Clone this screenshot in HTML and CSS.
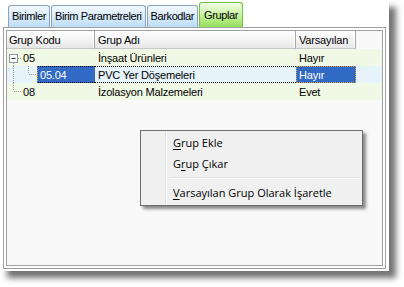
FILE: index.html
```html
<!DOCTYPE html>
<html>
<head>
<meta charset="utf-8">
<link rel="stylesheet" href="styles.css">
</head>
<body>
<div class="shot">
  <div class="tabs">
    <div class="tab">Birimler</div>
    <div class="tab">Birim Parametreleri</div>
    <div class="tab">Barkodlar</div>
    <div class="tab active">Gruplar</div>
  </div>
  <div class="panel">
    <div class="grid">
      <div class="row head">
        <div class="cell c1">Grup Kodu</div>
        <div class="cell c2">Grup Adı</div>
        <div class="cell c3">Varsayılan</div>
      </div>
      <div class="row green">
        <div class="cell c1 tree">
          <svg class="tl" width="16" height="17" viewBox="0 0 16 17">
            <rect x="2.5" y="5.5" width="8" height="8" fill="#fbfbfb" stroke="#8c9aa8"/>
            <path d="M4.5 9.5h4" stroke="#333" stroke-width="1"/>
            <path d="M11 9.5h4" stroke="#a0a0a0" stroke-dasharray="1 1"/>
            <path d="M6.5 14v3" stroke="#a0a0a0" stroke-dasharray="1 1"/>
          </svg>
          <span class="code">05</span>
        </div>
        <div class="cell c2">İnşaat Ürünleri</div>
        <div class="cell c3">Hayır</div>
      </div>
      <div class="row blue">
        <div class="cell c1 tree">
          <svg class="tl" width="30" height="17" viewBox="0 0 30 17">
            <path d="M6.5 0v17" stroke="#a0a0a0" stroke-dasharray="1 1"/>
            <path d="M21.5 0v8" stroke="#a0a0a0" stroke-dasharray="1 1"/>
            <path d="M22 8.5h8" stroke="#a0a0a0" stroke-dasharray="1 1"/>
          </svg>
          <span class="sel">05.04</span>
        </div>
        <div class="cell c2 focus">PVC Yer Döşemeleri</div>
        <div class="cell c3 selcell">Hayır</div>
      </div>
      <div class="row green">
        <div class="cell c1 tree">
          <svg class="tl" width="16" height="17" viewBox="0 0 16 17">
            <path d="M6.5 0v8" stroke="#a0a0a0" stroke-dasharray="1 1"/>
            <path d="M7 8.5h7" stroke="#a0a0a0" stroke-dasharray="1 1"/>
          </svg>
          <span class="code">08</span>
        </div>
        <div class="cell c2">İzolasyon Malzemeleri</div>
        <div class="cell c3">Evet</div>
      </div>
    </div>
  </div>
  <div class="menu">
    <div class="item"><u>G</u>rup Ekle</div>
    <div class="item">G<u>r</u>up Çıkar</div>
    <div class="sep"></div>
    <div class="item"><u>V</u>arsayılan Grup Olarak İşaretle</div>
  </div>
</div>
</body>
</html>
```

FILE: styles.css
```css
html, body {
  margin: 0;
  padding: 0;
  background: #ffffff;
}
body {
  width: 404px;
  height: 287px;
  overflow: hidden;
  font-family: "Liberation Sans", Arial, sans-serif;
  font-size: 11px;
  color: #000;
}
.shot {
  position: relative;
  width: 389px;
  height: 271px;
  background: #ffffff;
  box-shadow: 7px 7px 6px rgba(0, 0, 0, 0.55);
  display: flex;
  flex-direction: column;
}
.tabs {
  height: 27px;
  display: flex;
  align-items: flex-end;
  gap: 1px;
  padding-left: 8px;
  letter-spacing: -0.4px;
}
.tab {
  height: 22px;
  box-sizing: border-box;
  padding: 0 3px;
  border: 1px solid #8aa4bf;
  border-bottom: none;
  border-radius: 3px 3px 0 0;
  background: linear-gradient(#f2f8fd, #d6eafa 55%, #bcdcf5);
  display: flex;
  align-items: center;
  line-height: 1;
}
.tab.active {
  height: 25px;
  padding: 0 4px;
  border-color: #72c040;
  background: linear-gradient(#f3fde9, #c9f19f 50%, #93e05a);
}
.panel {
  margin-left: 3px;
  width: 383px;
  height: 242px;
  box-sizing: border-box;
  border: 1px solid #a0a0a0;
  padding: 2px;
  background: #ffffff;
}
.grid {
  height: 100%;
  box-sizing: border-box;
  border: 1px solid #a0a0a0;
  background: #f9f9f9;
  letter-spacing: -0.2px;
}
.row {
  display: grid;
  grid-template-columns: 88px 201px 60px;
  height: 17px;
}
.row.head {
  height: 18px;
  background: transparent;
}
.cell {
  display: flex;
  align-items: center;
  padding-left: 3px;
  white-space: nowrap;
  overflow: hidden;
}
.head .cell {
  padding-left: 2px;
  background: linear-gradient(#ffffff, #f4f4f4 50%, #e6e6e6);
  border-right: 1px solid #a5a5a5;
  border-bottom: 1px solid #c8c8c8;
  box-shadow: inset -1px 0 0 #ffffff;
}
.head .c2, .head .c3 { padding-left: 3px; }
.green { background: #f0f9e6; }
.blue { background: #e6f3fb; }
.tree { padding-left: 0; }
.tl { flex: none; display: block; }
.sel {
  flex: 1;
  align-self: stretch;
  display: flex;
  align-items: center;
  padding-left: 2px;
  background: #316ac5;
  color: #ffffff;
  box-sizing: border-box;
  border-top: 1px dotted #000;
  border-bottom: 1px dotted #000;
  border-left: 1px dotted #e0a040;
}
.focus {
  border-top: 1px dotted #000;
  border-bottom: 1px dotted #000;
}
.selcell {
  background: #316ac5;
  color: #ffffff;
  border: 1px dotted #e09a3a;
  padding-left: 2px;
}
.menu {
  position: absolute;
  left: 140px;
  top: 130px;
  width: 223px;
  height: 76px;
  box-sizing: border-box;
  padding: 1px 2px 2px;
  border: 1px solid #6e6e6e;
  background:
    linear-gradient(to right, transparent 24px, #e2e3e3 24px, #e2e3e3 25px, #ffffff 25px, #ffffff 26px, transparent 26px),
    #f0f0f0;
  box-shadow: 3px 3px 3px rgba(0, 0, 0, 0.45);
  font-family: "Open Sans", "Noto Sans", sans-serif;
  font-size: 11px;
  color: #000;
}
.item {
  height: 21px;
  display: flex;
  align-items: center;
  padding-left: 30px;
  white-space: nowrap;
}
.item u { text-decoration: underline; text-underline-offset: 2px; }
.sep {
  height: 1px;
  margin: 3px 0 3px 27px;
  background: #e0e0e0;
  border-bottom: 1px solid #ffffff;
}
```
